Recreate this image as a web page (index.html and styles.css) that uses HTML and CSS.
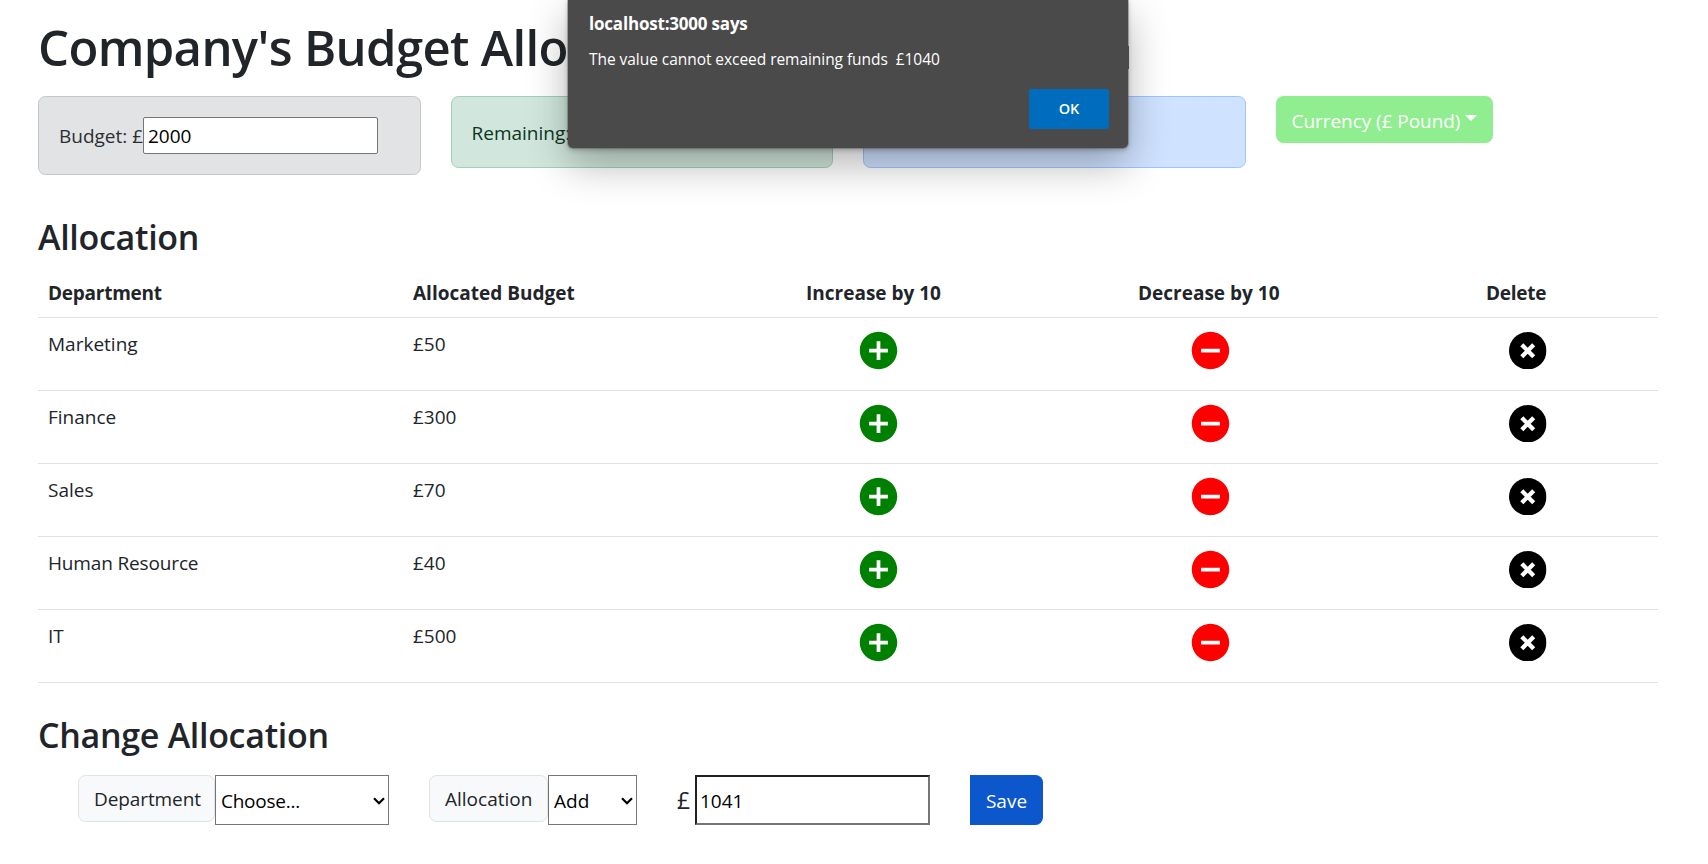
FILE: index.html
```html
<!DOCTYPE html>
<html lang="en">
<head>
<meta charset="utf-8">
<title>Budget Allocation</title>
<link rel="stylesheet" href="styles.css">
</head>
<body>
<svg class="sprite" width="0" height="0">
  <symbol id="add" viewBox="0 0 24 24"><path d="M12 2C6.48 2 2 6.48 2 12s4.48 10 10 10 10-4.48 10-10S17.52 2 12 2zm5 11h-4v4h-2v-4H7v-2h4V7h2v4h4v2z"/></symbol>
  <symbol id="minus" viewBox="0 0 24 24"><path d="M12 2C6.48 2 2 6.48 2 12s4.48 10 10 10 10-4.48 10-10S17.52 2 12 2zm5 11H7v-2h10v2z"/></symbol>
  <symbol id="remove" viewBox="0 0 24 24"><circle cx="12" cy="12" r="12"/><path d="M8.2 8.2l7.6 7.6M15.8 8.2l-7.6 7.6" stroke="#fff" stroke-width="2.8"/></symbol>
</svg>
<main class="container">
  <h1 class="title">Company's Budget Allocation</h1>
  <div class="cards">
    <div class="alert alert-secondary"><span class="budget-label">Budget: £</span><input class="budget-input" type="text" value="2000"></div>
    <div class="alert alert-success"><span class="remaining">Remaining: £1040</span></div>
    <div class="alert alert-primary"></div>
    <div><button class="currency"><span class="currency-text">Currency (£ Pound)</span><i class="caret"></i></button></div>
  </div>
  <h3 class="heading h-alloc">Allocation</h3>
  <table class="table">
    <colgroup><col class="c1"><col class="c2"><col class="c3"><col class="c4"><col class="c5"></colgroup>
    <thead><tr><th class="th-tight">Department</th><th>Allocated Budget</th><th>Increase by 10</th><th>Decrease by 10</th><th class="th-tight">Delete</th></tr></thead>
    <tbody>
      <tr><td>Marketing</td><td>£50</td><td><svg class="icon add"><use href="#add"/></svg></td><td><svg class="icon minus"><use href="#minus"/></svg></td><td><svg class="icon-del"><use href="#remove"/></svg></td></tr>
      <tr><td>Finance</td><td>£300</td><td><svg class="icon add"><use href="#add"/></svg></td><td><svg class="icon minus"><use href="#minus"/></svg></td><td><svg class="icon-del"><use href="#remove"/></svg></td></tr>
      <tr><td>Sales</td><td>£70</td><td><svg class="icon add"><use href="#add"/></svg></td><td><svg class="icon minus"><use href="#minus"/></svg></td><td><svg class="icon-del"><use href="#remove"/></svg></td></tr>
      <tr><td class="td-tight">Human Resource</td><td>£40</td><td><svg class="icon add"><use href="#add"/></svg></td><td><svg class="icon minus"><use href="#minus"/></svg></td><td><svg class="icon-del"><use href="#remove"/></svg></td></tr>
      <tr><td>IT</td><td>£500</td><td><svg class="icon add"><use href="#add"/></svg></td><td><svg class="icon minus"><use href="#minus"/></svg></td><td><svg class="icon-del"><use href="#remove"/></svg></td></tr>
    </tbody>
  </table>
  <h3 class="heading h-change">Change Allocation</h3>
  <div class="form">
    <span class="group-text dep">Department</span>
    <div class="select sel-dep"><span class="choose">Choose...</span><svg class="chev" viewBox="0 0 12 8"><path d="M1 1.3l5 5 5-5"/></svg></div>
    <span class="group-text alloc">Allocation</span>
    <div class="select sel-add"><span>Add</span><svg class="chev" viewBox="0 0 12 8"><path d="M1 1.3l5 5 5-5"/></svg></div>
    <span class="pound">£</span>
    <input class="amount" type="text" value="1041">
    <button class="save">Save</button>
  </div>
</main>
<div class="dialog">
  <div class="dialog-title">localhost:3000 says</div>
  <div class="dialog-msg">The value cannot exceed remaining funds&nbsp; £1040</div>
  <button class="ok">OK</button>
</div>
</body>
</html>
```
FILE: styles.css
```css
* { box-sizing: border-box; }
body { margin: 0; height: 864px; overflow: hidden; background: #fff; color: #212529; font: 400 19px/30px "Segoe UI", "Open Sans", "Noto Sans", sans-serif; }
button, input { font: inherit; margin: 0; }
.sprite { position: absolute; }
.container { width: 1620px; margin: 0 0 0 38px; padding-top: 17px; }
.title { margin: 0 0 19px; height: 60px; font-size: 49px; line-height: 60px; font-weight: 550; letter-spacing: -0.65px; white-space: nowrap; }
.cards { display: grid; grid-template-columns: repeat(4, 382.5px); column-gap: 30px; align-items: start; height: 119px; }
.alert { height: 72px; padding: 20px; border: 1px solid; border-radius: 7.5px; display: flex; align-items: center; white-space: nowrap; }
.alert-secondary { height: 79px; background: #e2e3e5; border-color: #c4c8cb; color: #2b2f32; }
.alert-success { background: #d1e7dd; border-color: #a3cfbb; color: #0a3622; padding-top: 22px; }
.alert-primary { background: #cfe2ff; border-color: #9ec5fe; }
.budget-label { width: 84px; }
.budget-input { width: 235px; height: 37px; padding: 1px 4px; border: 1px solid #767676; border-radius: 2px; color: #000; }
.currency { display: flex; width: 217px; height: 47px; padding: 2px 15px 0 16px; border: 0; border-radius: 7.5px; background: #90ee90; color: #fff; align-items: center; white-space: nowrap; }
.currency-text { width: 173px; text-align: left; letter-spacing: -0.05px; }
.caret { border: 6px solid transparent; border-top-color: #fff; border-bottom: 0; margin-top: -5px; }
.heading { margin: 0; height: 42px; line-height: 42px; font-size: 34px; font-weight: 560; letter-spacing: -0.3px; }
.h-alloc { margin: 1px 0 11px; }
.table { width: 1620px; table-layout: fixed; border-collapse: collapse; }
.c1 { width: 365px; } .c2 { width: 393px; } .c3 { width: 332px; } .c4 { width: 348px; } .c5 { width: 182px; }
th, td { text-align: left; vertical-align: top; border-bottom: 1px solid #dee2e6; }
th { height: 48px; padding: 9px 10px 8px; font-weight: 700; }
td { height: 73px; padding: 11px 10px 10px; }
.th-tight { letter-spacing: -0.25px; }
.td-tight { letter-spacing: -0.15px; }
.icon, .icon-del { display: block; fill: currentColor; }
.icon { width: 45px; height: 45px; margin: -1px 0 0 50px; }
.add { color: green; }
.minus { color: red; }
.icon-del { width: 37.5px; height: 37.5px; color: #000; margin: 3px 0 0 23px; }
.h-change { margin: 31px 0 19px; }
.form { display: flex; align-items: flex-start; padding-left: 40px; }
.group-text { height: 47px; border: 1px solid #dee2e6; border-radius: 7.5px; background: #f8f9fa; padding: 8px 15px; }
.dep { width: 137px; letter-spacing: -0.1px; }
.alloc { width: 119px; margin-left: 40px; }
.select { height: 50px; border: 1px solid #767676; background: #fff; color: #000; display: flex; align-items: center; justify-content: space-between; padding: 2px 3px 0 5px; }
.sel-dep { width: 174px; }
.sel-add { width: 89px; }
.choose { letter-spacing: -0.25px; }
.chev { width: 12px; height: 8px; fill: none; stroke: #000; stroke-width: 2.2; }
.pound { font-size: 23px; line-height: 50px; width: 18px; margin-left: 40px; }
.amount { width: 235px; height: 50px; padding: 2px 3px 0; border: 2px solid; border-color: #212121 #767676 #767676 #212121; border-radius: 0; color: #000; }
.save { width: 73px; height: 50px; margin-left: 40px; padding: 2px 0 0; border: 0; border-radius: 0 7.5px 7.5px 0; background: #0b57cb; color: #fff; }
.dialog { position: absolute; left: 568px; top: 0; width: 560px; height: 148px; padding: 12px 19px 19px 21px; background: #4a4a4a; color: #fff; border-radius: 0 0 5px 5px; box-shadow: 0 0 0 1px rgba(90,90,90,.4), 0 2px 5px rgba(0,0,0,.25), 0 16px 40px rgba(0,0,0,.3); display: flex; flex-direction: column; white-space: nowrap; }
.dialog::after { content: ""; position: absolute; right: -1px; top: 46px; width: 1px; height: 23px; background: #4a4a4a; }
.dialog-title { font-size: 17px; line-height: 24px; font-weight: 700; letter-spacing: -0.2px; }
.dialog-msg { font-size: 15.5px; line-height: 24px; margin-top: 11px; letter-spacing: -0.05px; }
.ok { margin-top: auto; align-self: flex-end; width: 80px; height: 40px; padding: 0 1px 1px; border: 0; border-radius: 2px; background: #006cbe; color: #fff; font-size: 14.5px; font-weight: 600; }
```
